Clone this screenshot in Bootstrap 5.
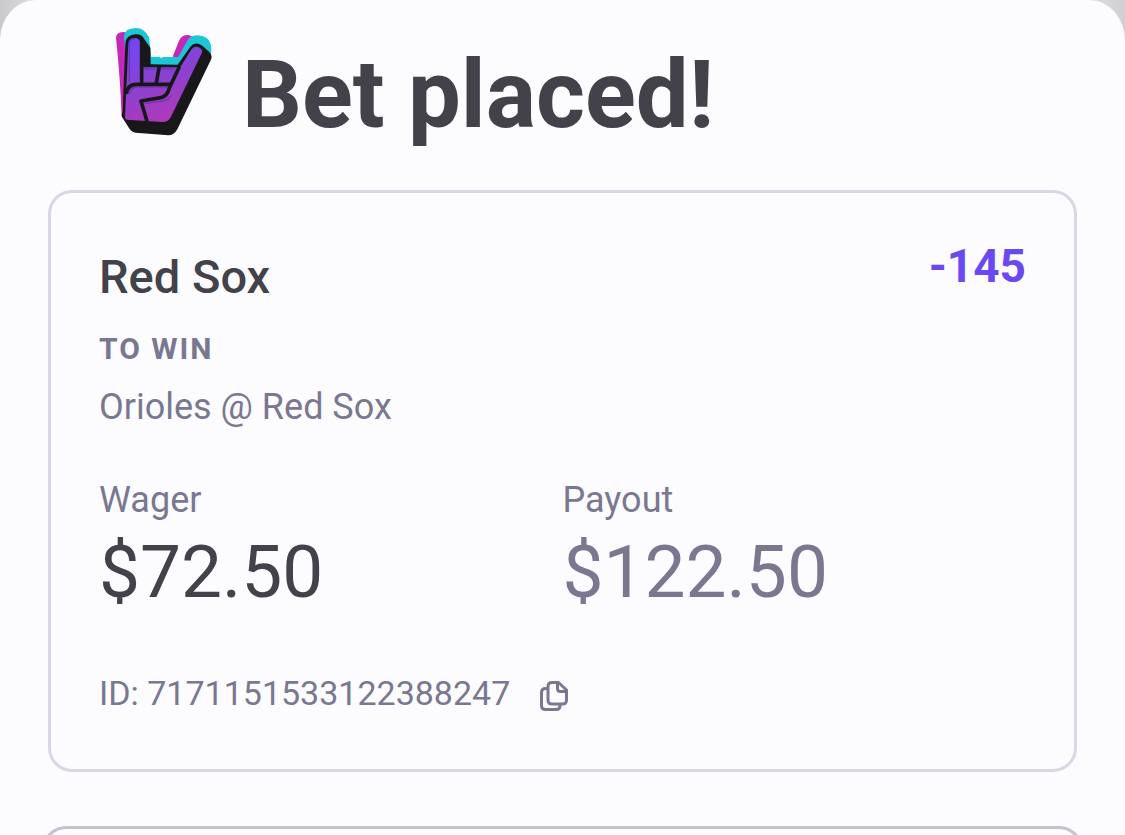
<!DOCTYPE html>
<html lang="en">
<head>
<meta charset="utf-8">
<meta name="viewport" content="width=device-width, initial-scale=1">
<title>Bet placed!</title>
<link href="https://cdn.jsdelivr.net/npm/bootstrap@5.3.0/dist/css/bootstrap.min.css" rel="stylesheet">
<style>
  :root { --ink: #43424a; --muted-ink: #7a7891; --accent: #6a49f2; --sheet: #fcfcfe; }
  body { font-family: Roboto, "Liberation Sans", sans-serif; color: var(--ink); background: linear-gradient(90deg, #c9c9cb, #dededf 3%, #dededf 97%, #cfcfd1); }
  .sheet { background: var(--sheet); border-radius: 36px 36px 0 0 / 40px 40px 0 0; padding: 27px 42px 0; }
  .page-title { font-size: 94px; line-height: 96px; font-weight: 700; margin: 20px 0 0 30px; }
  .title-row { padding-left: 73px; margin-bottom: 47px; }
  .bet-card { background: transparent; border: 3px solid #d9d7e4; border-radius: 24px; margin: 0 6px 54px; }
  .bet-card .card-body { padding: 45px 48px 54px; }
  .next-card { background: transparent; border: 3px solid #c4c2d2; border-radius: 24px; height: 60px; }
  .team { font-size: 47px; line-height: 56px; font-weight: 500; margin: 11px 0 24px; }
  .odds { font-size: 46px; line-height: 56px; font-weight: 700; color: var(--accent); }
  .market { font-size: 30px; line-height: 40px; font-weight: 700; letter-spacing: 2px; margin-bottom: 16px; }
  .info { font-size: 36px; line-height: 44px; }
  .soft { color: var(--muted-ink); }
  .stakes { margin: 49px 0 59px; }
  .amount { font-size: 73px; line-height: 80px; margin: 10px 0 0; }
  .bet-id { font-size: 34px; line-height: 44px; gap: 30px; }
  .copy-btn { line-height: 0; color: var(--muted-ink); padding: 10px 0 0; border: 0; }
</style>
</head>
<body class="vh-100 overflow-hidden">
<main class="sheet min-vh-100">
  <header class="title-row d-flex align-items-start">
    <svg class="flex-shrink-0" width="97" height="110" viewBox="45 36 291 330" aria-hidden="true">
      <defs>
        <linearGradient id="hand" gradientUnits="userSpaceOnUse" x1="100" y1="70" x2="190" y2="320">
          <stop offset="0" stop-color="#6e47f6"/><stop offset=".5" stop-color="#8842d2"/><stop offset="1" stop-color="#b038ba"/>
        </linearGradient>
      </defs>
      <path fill="#c428b8" d="M48 70q-1-18 22-19l30 5-22 262-13-16Q60 180 48 70ZM218 125l19-48q8-18 28-17l16 6-20 64Z"/>
      <path fill="#1dc5d6" d="M72 64q1-24 35-25 25-1 40 28l7 59 24-1 6 4 6-3h45l25-46q8-18 32-19 34 1 40 27 4 11 1 26l-93 90-160-40Z"/>
      <path fill="#18171a" d="M76 86q1-26 31-28 18-1 25 13l19 27 1 50 81 1 38-54q14-17 36-3l22 20q10 10 3 24l-100 207q-10 18-27 18l-98-8q-12-1-20-14l-21-33q-2-5 2-18Z"/>
      <path fill="url(#hand)" d="M85 85q1-15 18-16 17 0 17 15l4 73h112l-3 12 42-67q10-11 24-4 12 7 5 19l-91 188q-8 16-25 16l-108-7q-5-1-5-8Z"/>
      <g fill="none" stroke="#18171a" stroke-width="11" stroke-linejoin="round">
        <path d="M125 84v120M178 154l-9 49M79 237q3-29 31-29h100M238 155l-30 64q-6 24-25 29l-60 10 18 61"/>
      </g>
      <path fill="none" stroke="#34184f" stroke-width="3" opacity=".4" d="M88 200V84q2-12 17-12M133 162h37M184 162h40M88 237q5-21 26-21h88M134 266l55-8q20-4 25-18"/>
    </svg>
    <h1 class="page-title">Bet placed!</h1>
  </header>

  <section class="card bet-card">
    <div class="card-body">
      <div class="d-flex justify-content-between align-items-start">
        <h2 class="team">Red Sox</h2>
        <span class="odds">-145</span>
      </div>
      <div class="market soft">TO WIN</div>
      <div class="info soft">Orioles @ Red Sox</div>
      <dl class="row gx-0 stakes">
        <div class="col-6">
          <dt class="info soft fw-normal">Wager</dt>
          <dd class="amount">$72.50</dd>
        </div>
        <div class="col-6">
          <dt class="info soft fw-normal">Payout</dt>
          <dd class="amount soft">$122.50</dd>
        </div>
      </dl>
      <div class="d-flex align-items-start bet-id soft">
        <span>ID: 7171151533122388247</span>
        <button type="button" class="btn copy-btn" aria-label="Copy bet ID">
          <svg width="28" height="30" viewBox="0 0 28 30" fill="none" stroke="currentColor" stroke-width="3" stroke-linejoin="round">
            <path d="M7 7.500H5.500Q1.500 7.500 1.500 11.500V24.500Q1.500 28.500 5.500 28.500H16Q20 28.500 20 25V23"/>
            <path d="M12 1.500H18.500L26.500 9V19Q26.500 23 22.500 23H12Q8 23 8 19V5.500Q8 1.500 12 1.500Z"/>
            <path d="M17.500 2V7.500Q17.500 10.500 20.500 10.500H26"/>
          </svg>
        </button>
      </div>
    </div>
  </section>

  <section class="card next-card"></section>
</main>
<script src="https://cdn.jsdelivr.net/npm/bootstrap@5.3.0/dist/js/bootstrap.bundle.min.js"></script>
</body>
</html>
